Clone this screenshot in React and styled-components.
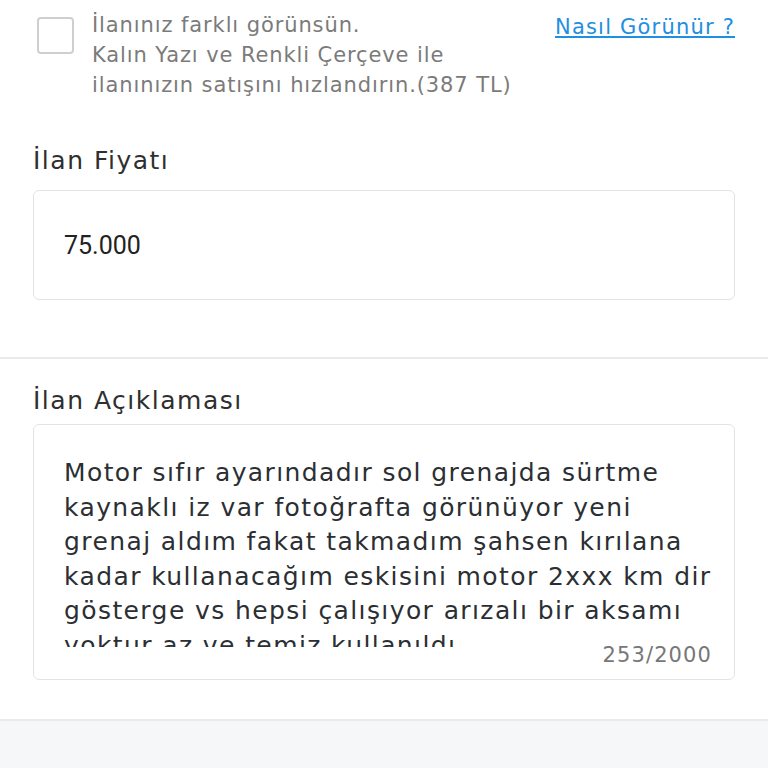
import React from "react";
import styled, { createGlobalStyle } from "styled-components";

const Global = createGlobalStyle`
  html, body { margin: 0; padding: 0; background: #ffffff; }
  body { font-family: "DejaVu Sans", "Open Sans", sans-serif; }
`;

const Page = styled.div`
  width: 768px;
  height: 768px;
  overflow: hidden;
  display: flex;
  flex-direction: column;
  background: #ffffff;
`;

const Section = styled.section`
  padding: ${(p) => p.$pad || "0 33px"};
  border-bottom: 2px solid #e9eaec;
  background: #ffffff;
`;

const OptionRow = styled.div`
  display: flex;
  align-items: flex-start;
  margin-top: 10px;
`;

const Checkbox = styled.div`
  width: 33px;
  height: 33px;
  margin: 7px 0 0 4px;
  border: 2.5px solid #cfcfcf;
  border-radius: 4px;
  flex: none;
`;

const OptionText = styled.div`
  flex: 1;
  margin-left: 18px;
  font-size: 21px;
  line-height: 30px;
  letter-spacing: 0.9px;
  color: #7b7b7b;
  white-space: pre-line;
`;

const Link = styled.a`
  font-size: 21px;
  line-height: 30px;
  letter-spacing: 1.2px;
  color: #1e8fe1;
  text-decoration: underline;
  margin-top: 2px;
  flex: none;
`;

const Label = styled.div`
  font-size: 25px;
  line-height: 30px;
  letter-spacing: 1.5px;
  color: #2f2f2f;
  margin-top: ${(p) => p.$mt || "0"};
`;

const InputBox = styled.div`
  margin-top: 14px;
  height: 108px;
  border: 1.5px solid #e3e3e3;
  border-radius: 6px;
  display: flex;
  align-items: center;
  padding-left: 30px;
  font-family: Roboto, "Noto Sans", sans-serif;
  font-size: 25px;
  color: #222;
`;

const TextBox = styled.div`
  margin-top: 8px;
  height: 256px;
  box-sizing: border-box;
  border: 1.5px solid #e3e3e3;
  border-radius: 6px;
  padding: 31px 22px 11px 30px;
  display: flex;
  flex-direction: column;
`;

const Description = styled.div`
  height: 192px;
  overflow: hidden;
  font-size: 25px;
  line-height: 34.5px;
  letter-spacing: 1.4px;
  color: #2b2f33;
  white-space: pre-line;
`;

const Counter = styled.div`
  align-self: flex-end;
  margin-top: -5px;
  font-size: 21px;
  line-height: 26px;
  letter-spacing: 1.1px;
  color: #777;
`;

const Footer = styled.div`
  flex: 1;
  background: #f6f7f9;
`;

export default function App() {
  return (
    <Page>
      <Global />
      <Section $pad="0 33px 57px">
        <OptionRow>
          <Checkbox />
          <OptionText>
            {"İlanınız farklı görünsün.\nKalın Yazı ve Renkli Çerçeve ile\nilanınızın satışını hızlandırın.(387 TL)"}
          </OptionText>
          <Link href="#">Nasıl Görünür ?</Link>
        </OptionRow>
        <Label $mt="46px">İlan Fiyatı</Label>
        <InputBox>75.000</InputBox>
      </Section>
      <Section $pad="27px 33px 39px">
        <Label>İlan Açıklaması</Label>
        <TextBox>
          <Description>
            {"Motor sıfır ayarındadır sol grenajda sürtme\nkaynaklı iz var fotoğrafta görünüyor yeni\ngrenaj aldım fakat takmadım şahsen kırılana\nkadar kullanacağım eskisini motor 2xxx km dir\ngösterge vs hepsi çalışıyor arızalı bir aksamı\nyoktur az ve temiz kullanıldı"}
          </Description>
          <Counter>253/2000</Counter>
        </TextBox>
      </Section>
      <Footer />
    </Page>
  );
}
